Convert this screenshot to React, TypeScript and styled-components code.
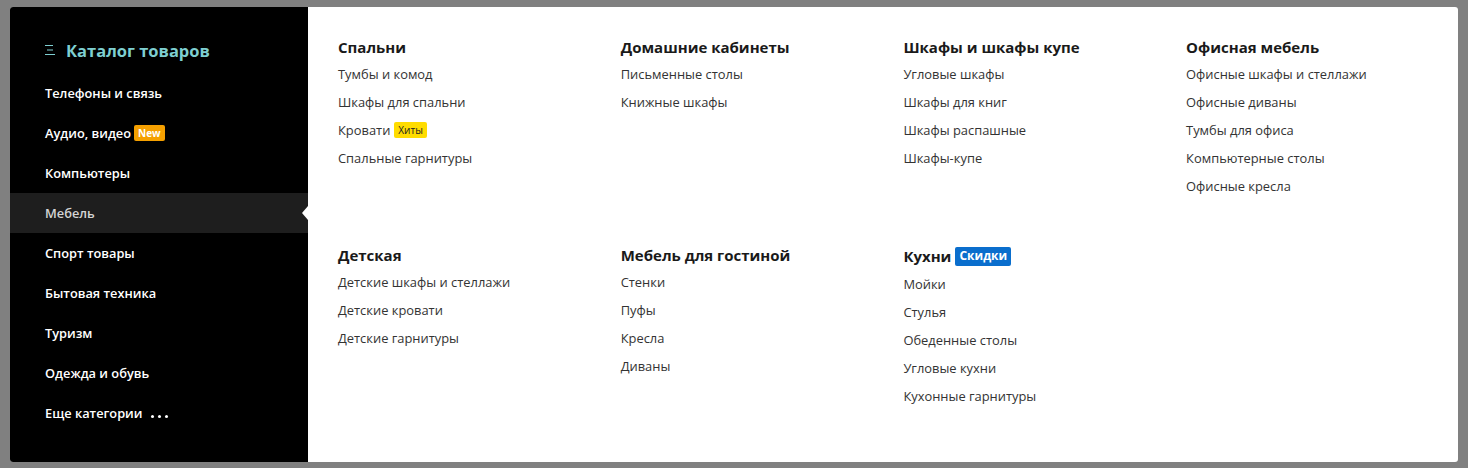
import React from 'react'
import styled, { createGlobalStyle } from 'styled-components'

type Badge = { text: string; kind: 'new' | 'hit' | 'sale' }
type Link = { title: string; badge?: Badge }
type Group = { title: string; badge?: Badge; links: Link[] }

const menu: { title: string; badge?: Badge }[] = [
  { title: 'Телефоны и связь' },
  { title: 'Аудио, видео', badge: { text: 'New', kind: 'new' } },
  { title: 'Компьютеры' },
  { title: 'Мебель' },
  { title: 'Спорт товары' },
  { title: 'Бытовая техника' },
  { title: 'Туризм' },
  { title: 'Одежда и обувь' },
]

const groups: Group[] = [
  {
    title: 'Спальни',
    links: [
      { title: 'Тумбы и комод' },
      { title: 'Шкафы для спальни' },
      { title: 'Кровати', badge: { text: 'Хиты', kind: 'hit' } },
      { title: 'Спальные гарнитуры' },
    ],
  },
  {
    title: 'Домашние кабинеты',
    links: [{ title: 'Письменные столы' }, { title: 'Книжные шкафы' }],
  },
  {
    title: 'Шкафы и шкафы купе',
    links: [
      { title: 'Угловые шкафы' },
      { title: 'Шкафы для книг' },
      { title: 'Шкафы распашные' },
      { title: 'Шкафы-купе' },
    ],
  },
  {
    title: 'Офисная мебель',
    links: [
      { title: 'Офисные шкафы и стеллажи' },
      { title: 'Офисные диваны' },
      { title: 'Тумбы для офиса' },
      { title: 'Компьютерные столы' },
      { title: 'Офисные кресла' },
    ],
  },
  {
    title: 'Детская',
    links: [
      { title: 'Детские шкафы и стеллажи' },
      { title: 'Детские кровати' },
      { title: 'Детские гарнитуры' },
    ],
  },
  {
    title: 'Мебель для гостиной',
    links: [{ title: 'Стенки' }, { title: 'Пуфы' }, { title: 'Кресла' }, { title: 'Диваны' }],
  },
  {
    title: 'Кухни',
    badge: { text: 'Скидки', kind: 'sale' },
    links: [
      { title: 'Мойки' },
      { title: 'Стулья' },
      { title: 'Обеденные столы' },
      { title: 'Угловые кухни' },
      { title: 'Кухонные гарнитуры' },
    ],
  },
]

const ACTIVE = 'Мебель'

const App = () => {
  return (
    <>
      <GlobalStyle />
      <Frame>
        <Sidebar>
          <SideHeader>
            <MenuIcon width="11" height="12" viewBox="0 0 11 12">
              <path d="M0 1.5h8M2 6h6M0 10.5h10" stroke="#7ecfd1" strokeWidth="1.2" />
            </MenuIcon>
            <SideTitle>Каталог товаров</SideTitle>
          </SideHeader>
          <MenuList>
            {menu.map((item) => (
              <MenuItem key={item.title} $active={item.title === ACTIVE}>
                {item.title}
                {item.badge && <Tag $kind={item.badge.kind}>{item.badge.text}</Tag>}
              </MenuItem>
            ))}
            <MenuItem $active={false}>
              Еще категории
              <Dots>
                <i />
                <i />
                <i />
              </Dots>
            </MenuItem>
          </MenuList>
        </Sidebar>
        <Panel>
          {groups.map((group) => (
            <Column key={group.title}>
              <GroupTitle $withBadge={!!group.badge}>
                {group.title}
                {group.badge && <Tag $kind={group.badge.kind}>{group.badge.text}</Tag>}
              </GroupTitle>
              <LinkList>
                {group.links.map((link) => (
                  <LinkItem key={link.title}>
                    {link.title}
                    {link.badge && <Tag $kind={link.badge.kind}>{link.badge.text}</Tag>}
                  </LinkItem>
                ))}
              </LinkList>
            </Column>
          ))}
        </Panel>
      </Frame>
    </>
  )
}

export default App

const GlobalStyle = createGlobalStyle`
  html, body {
    margin: 0;
    padding: 0;
    background: #808080;
    font-family: 'Open Sans', 'Noto Sans', sans-serif;
  }
  body {
    padding: 7px 10px 6px;
  }
`

const Frame = styled.div`
  display: flex;
  width: 1448px;
  height: 455px;
  border-radius: 3px;
  overflow: hidden;
  background: #fff;
`

const Sidebar = styled.aside`
  width: 298px;
  flex-shrink: 0;
  background: #000;
  padding-top: 23px;
  box-sizing: border-box;
`

const SideHeader = styled.div`
  display: flex;
  align-items: center;
  height: 40px;
  padding-left: 35px;
  margin-bottom: 3px;
`

const MenuIcon = styled.svg`
  margin-right: 10px;
`

const SideTitle = styled.span`
  color: #7ecfd1;
  font-size: 16.5px;
  font-weight: 700;
`

const MenuList = styled.ul`
  list-style: none;
  margin: 0;
  padding: 0;
`

const MenuItem = styled.li<{ $active: boolean }>`
  position: relative;
  display: flex;
  align-items: center;
  height: 40px;
  padding-left: 35px;
  font-size: 12.8px;
  font-weight: 600;
  color: ${({ $active }) => ($active ? '#d4d4d4' : '#fff')};
  background: ${({ $active }) => ($active ? '#1e1e1e' : 'transparent')};

  ${({ $active }) =>
    $active &&
    `
    &::after {
      content: '';
      position: absolute;
      right: 0;
      top: 13px;
      border-style: solid;
      border-width: 7px 6px 7px 0;
      border-color: transparent #fff transparent transparent;
    }
  `}
`

const Dots = styled.span`
  display: flex;
  gap: 4px;
  margin-left: 9px;
  margin-top: 6px;

  & i {
    display: block;
    width: 3px;
    height: 3px;
    border-radius: 50%;
    background: #fff;
  }
`

const Tag = styled.span<{ $kind: 'new' | 'hit' | 'sale' }>`
  display: inline-flex;
  align-items: center;
  margin-left: 3px;
  border-radius: 2px;
  line-height: 1;
  ${({ $kind }) =>
    $kind === 'new'
      ? `
    background: #f5a000;
    color: #fff;
    font-size: 10px;
    font-weight: 700;
    height: 16px;
    padding: 0 4px;
  `
      : $kind === 'hit'
      ? `
    background: #ffdc00;
    color: #222;
    font-size: 10px;
    font-weight: 400;
    height: 16px;
    padding: 0 4px;
    margin-left: 4px;
  `
      : `
    background: #0a6ecd;
    color: #fff;
    font-size: 12px;
    font-weight: 700;
    height: 19px;
    padding: 0 4px;
    margin-left: 4px;
  `}
`

const Panel = styled.div`
  flex: 1;
  display: grid;
  grid-template-columns: repeat(4, 282.7px);
  align-content: start;
  row-gap: 45px;
  padding: 30px 0 0 30px;
`

const Column = styled.div`
  display: flex;
  flex-direction: column;
`

const GroupTitle = styled.h3<{ $withBadge: boolean }>`
  display: flex;
  align-items: center;
  margin: 0;
  height: ${({ $withBadge }) => ($withBadge ? '22px' : '20px')};
  font-size: 15px;
  font-weight: 700;
  color: #1a1a1a;
`

const LinkList = styled.ul`
  list-style: none;
  margin: 3px 0 0;
  padding: 0;
`

const LinkItem = styled.li`
  display: flex;
  align-items: center;
  height: 28px;
  font-size: 12.9px;
  color: #333;
`
